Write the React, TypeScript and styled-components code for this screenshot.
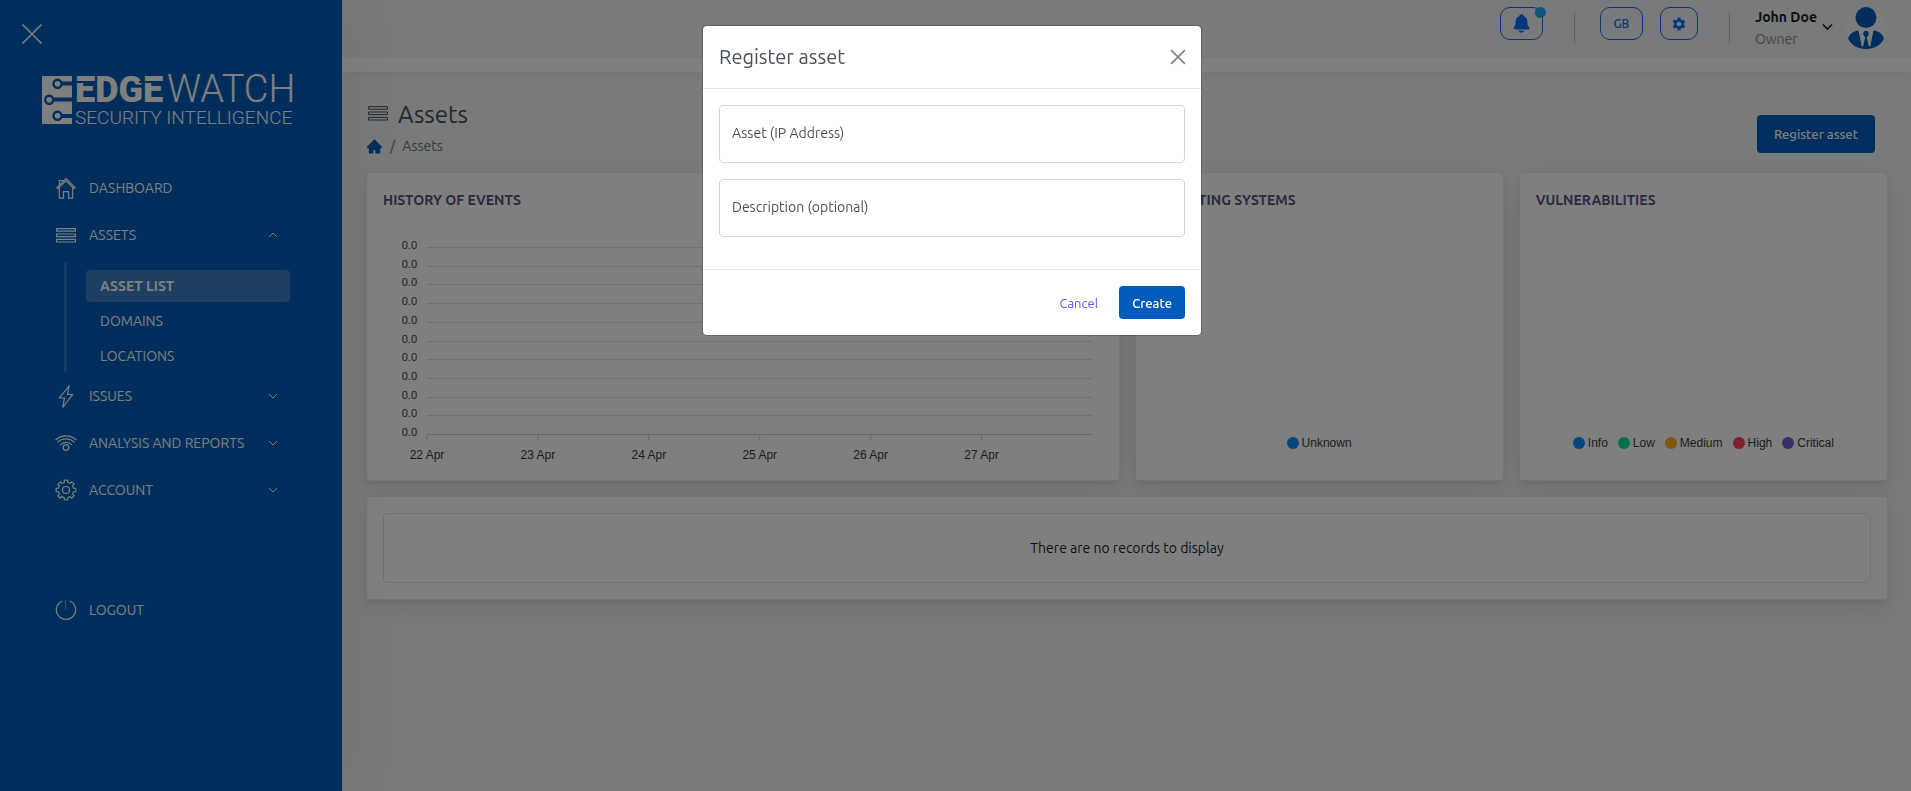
import React from "react";
import styled, { createGlobalStyle } from "styled-components";
import { IoNotifications, IoSettingsSharp } from "react-icons/io5";
import { AiFillHome } from "react-icons/ai";

const uiFont = `Ubuntu, "Noto Sans", "Open Sans", sans-serif`;
const chartFont = `Helvetica, "Liberation Sans", Arial, sans-serif`;

const GlobalStyle = createGlobalStyle`
  *, *::before, *::after { box-sizing: border-box; }
  body { margin: 0; background: #f1f4f6; color: #495057; font: 14px/20px ${uiFont}; }
  button, input { font: inherit; }
  a { color: inherit; text-decoration: none; }
  h1, h2, h3, p, ul, ol { margin: 0; padding: 0; }
  ul, ol { list-style: none; }
`;

/* ---------- page shell ---------- */

const Shell = styled.div`
  display: grid;
  grid-template-columns: 342px minmax(0, 1fr);
  min-height: 100vh;
`;

const Sidebar = styled.aside`
  z-index: 1;
  background: #005cb8;
  color: #fff;
  box-shadow: 7px 0 60px rgba(8, 10, 12, 0.06);
`;

const MenuClose = styled.button`
  display: block;
  margin: 23px 0 0 21px;
  padding: 0;
  border: 0;
  background: none;
  color: inherit;
  line-height: 0;
`;

const LogoLink = styled.a`
  display: block;
  width: 250px;
  margin: 31px 0 0 42px;
  line-height: 0;
`;

const Nav = styled.nav`
  margin: 40px 52px 0;
`;

const NavLink = styled.a<{ $spaced?: boolean }>`
  display: grid;
  grid-template-columns: 28px 1fr 16px;
  align-items: center;
  column-gap: 9px;
  height: 47px;
  margin-top: ${(p) => (p.$spaced ? 73 : 0)}px;
  padding-right: 9px;
`;

const SubMenu = styled.ul`
  display: flex;
  flex-direction: column;
  gap: 3px;
  margin: 4px 0 0 12px;
  padding: 8px 0 0 19px;
  border-left: 3px solid rgba(255, 255, 255, 0.15);
  height: 110px;
`;

const SubLink = styled.a<{ $active?: boolean }>`
  display: block;
  padding: 6px 14px;
  border-radius: 4px;
  font-weight: ${(p) => (p.$active ? 700 : 400)};
  background: ${(p) => (p.$active ? "rgba(255,255,255,0.22)" : "transparent")};
`;

/* ---------- top bar ---------- */

const TopBar = styled.header`
  display: flex;
  justify-content: flex-end;
  align-items: flex-start;
  height: 72px;
  padding: 7px 24px 0;
  border-bottom: 14px solid #fff;
  box-shadow: 0 4px 10px rgba(4, 9, 20, 0.04);
`;

const PillButton = styled.button<{ $width: number }>`
  position: relative;
  display: flex;
  align-items: center;
  justify-content: center;
  width: ${(p) => p.$width}px;
  height: 33px;
  margin-right: 17px;
  padding: 0;
  border: 1px solid #0d6efd;
  border-radius: 10px;
  background: none;
  color: #0d6efd;
  font-size: 12px;
  font-weight: 500;
`;

const Badge = styled.span`
  position: absolute;
  top: -1px;
  right: -4px;
  width: 11px;
  height: 11px;
  border-radius: 50%;
  background: #18a8f0;
`;

const Divider = styled.span`
  width: 1px;
  height: 30px;
  margin: 6px 25px 0 14px;
  background: #bcbec0;
`;

const Account = styled.button`
  display: flex;
  align-items: flex-start;
  padding: 0;
  border: 0;
  background: none;
  text-align: left;
  color: #1d1e20;
`;

const AccountText = styled.span`
  display: flex;
  flex-direction: column;
  line-height: 22px;
  margin-top: -1px;
`;

const Role = styled.span`
  color: #8a8c8f;
`;

/* ---------- page content ---------- */

const Content = styled.div`
  padding: 24px 23px 24px 24px;
`;

const PageHead = styled.div`
  display: flex;
  justify-content: space-between;
  align-items: center;
  height: 76px;
  padding-right: 13px;
`;

const PageHeading = styled.div`
  padding-bottom: 12px;
`;

const PageTitle = styled.h1`
  display: flex;
  align-items: center;
  gap: 8px;
  color: #495057;
  font-size: 24px;
  font-weight: 400;
  line-height: 36px;
`;

const Crumbs = styled.ol`
  display: flex;
  align-items: center;
  gap: 7px;
  height: 26px;
  color: #6c757d;
`;

const CrumbHome = styled.a`
  display: flex;
  color: #005cb8;
`;

const PrimaryButton = styled.button<{ $large?: boolean }>`
  height: ${(p) => (p.$large ? 38 : 33)}px;
  padding: 0 ${(p) => (p.$large ? 17 : 13)}px;
  border: 0;
  border-radius: 4px;
  background: #005cbb;
  color: #fff;
  font-size: 13px;
  font-weight: 500;
`;

const Cards = styled.div`
  display: grid;
  grid-template-columns: repeat(12, minmax(0, 1fr));
  gap: 15px;
`;

const Card = styled.section<{ $span: number }>`
  grid-column: span ${(p) => p.$span};
  display: flex;
  flex-direction: column;
  padding: 16px;
  border: 1px solid rgba(26, 54, 126, 0.1);
  border-radius: 4px;
  background: #fff;
  box-shadow:
    0 7px 35px rgba(4, 9, 20, 0.03),
    0 15px 22px rgba(4, 9, 20, 0.03),
    0 4px 8px rgba(4, 9, 20, 0.05),
    0 2px 3px rgba(4, 9, 20, 0.03);
`;

const CardTitle = styled.h2`
  color: #56567f;
  font-size: 14px;
  font-weight: 700;
  line-height: 22px;
`;

const ChartBox = styled.div`
  height: 253px;
  padding: 36px 10px 0 44px;
`;

const ChartSvg = styled.svg`
  display: block;
  width: 100%;
  height: 216px;
  overflow: visible;
  font-family: ${chartFont};
  fill: #373d3f;
`;

const Legend = styled.ul`
  display: flex;
  justify-content: center;
  gap: 10px;
  margin-top: auto;
  padding-bottom: 11px;
  font: 12px/20px ${chartFont};
  color: #373d3f;
`;

const LegendItem = styled.li<{ $color: string }>`
  display: flex;
  align-items: center;
  gap: 3px;
  &::before {
    content: "";
    width: 12px;
    height: 12px;
    border-radius: 50%;
    background: ${(p) => p.$color};
  }
`;

const EmptyState = styled.p`
  padding: 24px;
  border: 1px solid #e2e4e6;
  border-radius: 4px;
  text-align: center;
  color: #212529;
`;

/* ---------- dialog ---------- */

const Backdrop = styled.div`
  position: fixed;
  inset: 0;
  z-index: 10;
  display: flex;
  justify-content: center;
  align-items: flex-start;
  padding: 25px 7px 25px 0;
  background: rgba(0, 0, 0, 0.5);
`;

const Dialog = styled.form`
  width: 500px;
  border: 1px solid rgba(0, 0, 0, 0.2);
  border-radius: 5px;
  background: #fff;
  background-clip: padding-box;
`;

const DialogHead = styled.header`
  display: flex;
  justify-content: space-between;
  align-items: center;
  height: 63px;
  padding: 0 15px 0 16px;
  border-bottom: 1px solid #dee2e6;
`;

const DialogTitle = styled.h2`
  color: #495057;
  font-size: 20px;
  font-weight: 400;
  line-height: 30px;
`;

const DialogClose = styled.button`
  padding: 0;
  border: 0;
  background: none;
  color: #808080;
  line-height: 0;
`;

const DialogBody = styled.div`
  display: flex;
  flex-direction: column;
  gap: 16px;
  padding: 16px 16px 32px;
`;

const Field = styled.div`
  position: relative;
`;

const FieldInput = styled.input`
  display: block;
  width: 100%;
  height: 58px;
  padding: 16px 12px;
  border: 1px solid #ced4da;
  border-radius: 4px;
  background: #fff;
`;

const FieldLabel = styled.label`
  position: absolute;
  top: 18px;
  left: 13px;
  color: #495057;
`;

const DialogFoot = styled.footer`
  display: flex;
  justify-content: flex-end;
  gap: 8px;
  padding: 16px;
  border-top: 1px solid #dee2e6;
`;

const LinkButton = styled.button`
  padding: 0 13px;
  border: 0;
  background: none;
  color: #545cd8;
  font-size: 13px;
`;

/* ---------- icons ---------- */

const Cross = ({ size, stroke }: { size: number; stroke: number }) => (
  <svg width={size} height={size} viewBox="0 0 22 22" fill="none" stroke="currentColor" strokeWidth={stroke}>
    <path d="M1.5 1.5l19 19M20.5 1.5l-19 19" />
  </svg>
);

const Chevron = ({ up }: { up?: boolean }) => (
  <svg width="16" height="10" viewBox="0 0 16 10" fill="none" stroke="currentColor" strokeWidth="1">
    <path d={up ? "M4 7l4-4 4 4" : "M4 3l4 4 4-4"} />
  </svg>
);

const Glyph = ({ children }: { children: React.ReactNode }) => (
  <svg width="28" height="28" viewBox="0 0 28 28" fill="none" stroke="currentColor" strokeWidth="1.2">
    {children}
  </svg>
);

const HouseGlyph = () => (
  <Glyph>
    <path d="M4.3 14.2L14 4.5l9.7 9.7M5.5 15L14 6.8l8.5 8.2M7.3 13.5v10.7h4.2v-6.5h5v6.5h4.2V13.5M7.3 11V6.5h3.2v1.4" />
  </Glyph>
);

const bars = "M4.6 7.6h18.8v2.6H4.600zM4.6 13h18.8v2.6H4.600zM4.6 18.4h18.8v2.6H4.600z";

const BarsGlyph = () => (
  <Glyph>
    <path d={bars} />
  </Glyph>
);

const BoltGlyph = () => (
  <Glyph>
    <path d="M17.3 3.500L7.5 16h5l-1.8 9.500L20.5 12.500h-5z" strokeLinejoin="miter" />
  </Glyph>
);

const SignalGlyph = () => (
  <Glyph>
    <circle cx="14" cy="18.5" r="2.8" />
    <path d="M3.6 11a15 15 0 0 1 20.800 0M5.600 13.400a12 12 0 0 1 16.800 0M8 15.800a8.500 8.500 0 0 1 12 0" />
  </Glyph>
);

const gearPath = (() => {
  const parts: string[] = [];
  const at = (r: number, deg: number) => {
    const a = (deg * Math.PI) / 180;
    return `${(14 + r * Math.cos(a)).toFixed(2)} ${(14 + r * Math.sin(a)).toFixed(2)}`;
  };
  for (let i = 0; i < 8; i++) {
    const c = i * 45;
    parts.push(
      `${i ? "L" : "M"}${at(7.7, c - 13)}L${at(9.9, c - 10)}A9.9 9.9 0 0 1 ${at(9.9, c + 10)}` +
        `L${at(7.7, c + 13)}A7.7 7.7 0 0 1 ${at(7.7, c + 32)}`
    );
  }
  return parts.join("") + "Z";
})();

const GearGlyph = () => (
  <Glyph>
    <path d={gearPath} />
    <circle cx="14" cy="14" r="3.5" />
  </Glyph>
);

const PowerGlyph = () => (
  <Glyph>
    <path d="M10.2 5a9.6 9.6 0 1 0 7.6 0" />
    <path d="M13.5 4v9" opacity="0.4" />
  </Glyph>
);

const LogoSvg = styled.svg`
  overflow: visible;
  font-family: Roboto, sans-serif;
`;

const Logo = () => (
  <LogoSvg width="250" height="48" viewBox="0 0 250 48" role="img" aria-label="Edgewatch Security Intelligence">
    <path d="M0 0h30v48H0z" fill="#fff" />
    <path d="M16 7.500h15M7 23.500h24M16 40h15" stroke="#005cb8" strokeWidth="4" />
    <g fill="#fff" stroke="#005cb8" strokeWidth="2.400">
      <circle cx="15.500" cy="7.700" r="4" />
      <circle cx="7.200" cy="23.700" r="4" />
      <circle cx="15.500" cy="39.800" r="4" />
    </g>
    <g fill="#fff">
      <text x="33" y="26" fontSize="36" fontWeight="900">EDGE</text>
      <text x="125" y="26" fontSize="38" fontWeight="300">WATCH</text>
      <text x="33" y="48" fontSize="19" fontWeight="300">SECURITY INTELLIGENCE</text>
    </g>
    <path d="M32 6h22M97 6h24" stroke="#005cb8" strokeWidth="2" />
  </LogoSvg>
);

const Avatar = () => (
  <svg width="42" height="42" viewBox="0 0 42 42">
    <circle cx="21" cy="21" r="21" fill="#f7f8f9" />
    <g fill="#005cb8">
      <circle cx="21" cy="10.500" r="10.500" />
      <path d="M3 31.500C4.500 26.500 9 24 13.500 23.500L17 40l2.600-10-1.600-3.500 1.500-2.500h3l1.500 2.500-1.600 3.500L25 40l3.500-16.500c4.500.5 9 3 10.500 8C36 38 29 42 21 42S6 38 3 31.500z" />
    </g>
    <path d="M14.800 23.500L17.500 39l2-9M27.200 23.500L24.500 39l-2-9" fill="none" stroke="#f7f8f9" strokeWidth="1.500" />
  </svg>
);

/* ---------- chart ---------- */

const days = ["22 Apr", "23 Apr", "24 Apr", "25 Apr", "26 Apr", "27 Apr"];
const gridRows = Array.from({ length: 11 }, (_, i) => Math.round(i * 18.7));

const EventsChart = () => (
  <ChartSvg>
    {gridRows.map((y, i) => (
      <g key={y}>
        <line x1="0" x2="100%" y1={y + 0.5} y2={y + 0.5} stroke={i === 10 ? "#d0d0d0" : "#e0e0e0"} />
        <text x="-10" y={y + 2} fontSize="11" textAnchor="end">0.0</text>
      </g>
    ))}
    {days.map((day, i) => {
      const x = `${(i * 100) / 6}%`;
      return (
        <g key={day}>
          <line x1={x} x2={x} y1="187" y2="193" stroke="#d0d0d0" />
          <text x={x} y="212" fontSize="12" textAnchor="middle">{day}</text>
        </g>
      );
    })}
  </ChartSvg>
);

const severities = [
  { name: "Info", color: "#008ffb" },
  { name: "Low", color: "#00e396" },
  { name: "Medium", color: "#feb019" },
  { name: "High", color: "#ff4560" },
  { name: "Critical", color: "#775dd0" },
];

export default function App() {
  return (
    <>
      <GlobalStyle />
      <Shell>
        <Sidebar>
          <MenuClose type="button" aria-label="Close menu">
            <Cross size={22} stroke={1.6} />
          </MenuClose>
          <LogoLink href="#"><Logo /></LogoLink>
          <Nav>
            <NavLink href="#"><HouseGlyph />DASHBOARD</NavLink>
            <NavLink href="#"><BarsGlyph />ASSETS<Chevron up /></NavLink>
            <SubMenu>
              <li><SubLink href="#" $active>ASSET LIST</SubLink></li>
              <li><SubLink href="#">DOMAINS</SubLink></li>
              <li><SubLink href="#">LOCATIONS</SubLink></li>
            </SubMenu>
            <NavLink href="#"><BoltGlyph />ISSUES<Chevron /></NavLink>
            <NavLink href="#"><SignalGlyph />ANALYSIS AND REPORTS<Chevron /></NavLink>
            <NavLink href="#"><GearGlyph />ACCOUNT<Chevron /></NavLink>
            <NavLink href="#" $spaced><PowerGlyph />LOGOUT</NavLink>
          </Nav>
        </Sidebar>

        <main>
          <TopBar>
            <PillButton type="button" $width={43} aria-label="Notifications">
              <IoNotifications size={21} />
              <Badge />
            </PillButton>
            <Divider />
            <PillButton type="button" $width={43}>GB</PillButton>
            <PillButton type="button" $width={38} aria-label="Settings">
              <IoSettingsSharp size={14} />
            </PillButton>
            <Divider />
            <Account type="button">
              <AccountText>
                <strong>John Doe</strong>
                <Role>Owner</Role>
              </AccountText>
              <svg width="28" height="42" viewBox="0 0 28 42" fill="none" stroke="currentColor" strokeWidth="1.6">
                <path d="M6 17.500l4.500 4.500 4.500-4.500" />
              </svg>
              <Avatar />
            </Account>
          </TopBar>

          <Content>
            <PageHead>
              <PageHeading>
                <PageTitle>
                  <svg width="24" height="28" viewBox="2 2 24 28" fill="none" stroke="currentColor">
                    <path d={bars} />
                  </svg>
                  Assets
                </PageTitle>
                <Crumbs>
                  <li><CrumbHome href="#" aria-label="Home"><AiFillHome size={17} /></CrumbHome></li>
                  <li aria-hidden>/</li>
                  <li>Assets</li>
                </Crumbs>
              </PageHeading>
              <PrimaryButton type="button" $large>Register asset</PrimaryButton>
            </PageHead>

            <Cards>
              <Card $span={6}>
                <CardTitle>HISTORY OF EVENTS</CardTitle>
                <ChartBox><EventsChart /></ChartBox>
              </Card>
              <Card $span={3}>
                <CardTitle>OPERATING SYSTEMS</CardTitle>
                <Legend><LegendItem $color="#008ffb">Unknown</LegendItem></Legend>
              </Card>
              <Card $span={3}>
                <CardTitle>VULNERABILITIES</CardTitle>
                <Legend>
                  {severities.map((s) => (
                    <LegendItem key={s.name} $color={s.color}>{s.name}</LegendItem>
                  ))}
                </Legend>
              </Card>
              <Card $span={12}>
                <EmptyState>There are no records to display</EmptyState>
              </Card>
            </Cards>
          </Content>
        </main>
      </Shell>

      <Backdrop>
        <Dialog role="dialog" aria-modal="true" aria-labelledby="dialog-title">
          <DialogHead>
            <DialogTitle id="dialog-title">Register asset</DialogTitle>
            <DialogClose type="button" aria-label="Close">
              <Cross size={16} stroke={2.2} />
            </DialogClose>
          </DialogHead>
          <DialogBody>
            <Field>
              <FieldInput id="asset-ip" type="text" />
              <FieldLabel htmlFor="asset-ip">Asset (IP Address)</FieldLabel>
            </Field>
            <Field>
              <FieldInput id="asset-description" type="text" />
              <FieldLabel htmlFor="asset-description">Description (optional)</FieldLabel>
            </Field>
          </DialogBody>
          <DialogFoot>
            <LinkButton type="button">Cancel</LinkButton>
            <PrimaryButton type="button">Create</PrimaryButton>
          </DialogFoot>
        </Dialog>
      </Backdrop>
    </>
  );
}
